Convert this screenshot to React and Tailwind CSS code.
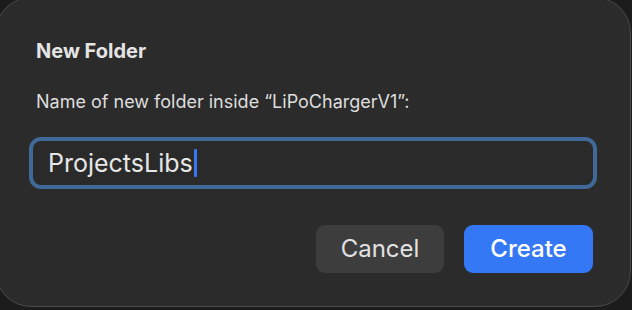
import React from 'react';

const App = () => {
  return (
    <div className="w-[632px] h-[310px] overflow-hidden bg-[#1c1c1c] font-['Inter','Liberation_Sans',sans-serif]">
      {/* dialog sheet, slightly cropped on the top-left */}
      <div className="-ml-[5px] -mt-[3px] w-[636px] h-[310px] rounded-[36px] border border-[#4a4a4a] bg-[#2b2b2b] pl-[40px] pr-[33px] pt-[41px] flex flex-col">
        <h1 className="text-[20px] leading-[24px] font-bold text-[#e4e4e4]">New Folder</h1>
        <p className="mt-[28px] text-[18px] leading-[22px] text-[#dedede]">
          Name of new folder inside “LiPoChargerV1”:
        </p>

        <div className="mt-[24px] -ml-[7px] h-[52px] rounded-[12px] border-[4px] border-[#40699a] bg-[#2a2a2a] flex items-center pl-[15px]">
          <span className="text-[25px] leading-none text-[#e6e6e6]">ProjectsLibs</span>
          <span className="ml-[1px] w-[3px] h-[28px] rounded-[1px] bg-[#3478f6]"></span>
        </div>

        <div className="mt-[36px] flex justify-end gap-[20px] pr-[4px]">
          <button className="w-[128px] h-[48px] rounded-[9px] bg-[#3d3d3d] text-[24px] text-[#e2e2e2]">
            Cancel
          </button>
          <button className="w-[129px] h-[48px] rounded-[9px] bg-[#3478f6] text-[24px] font-medium text-white">
            Create
          </button>
        </div>
      </div>
    </div>
  );
};

export default App;
